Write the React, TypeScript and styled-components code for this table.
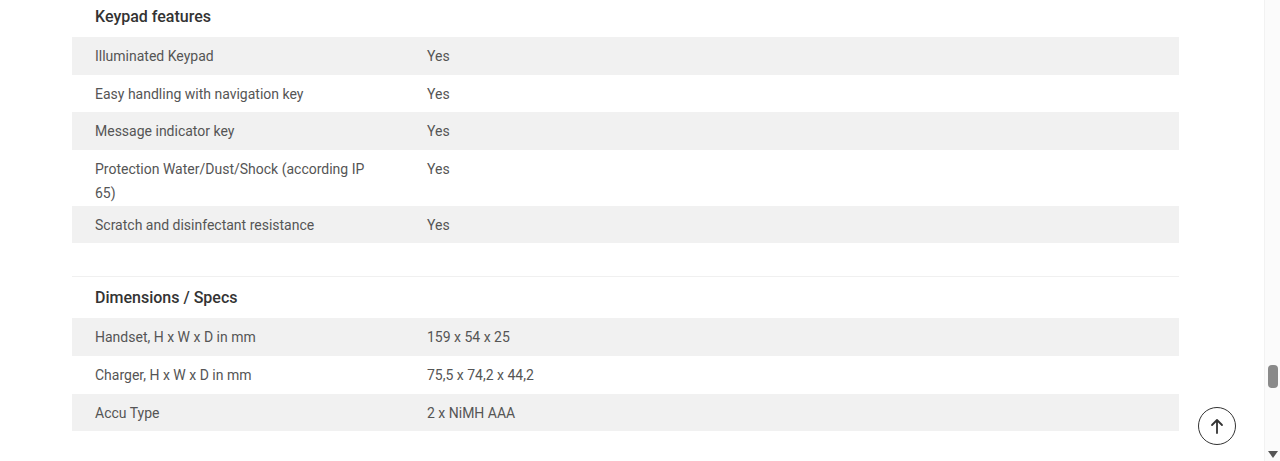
import styled, { createGlobalStyle } from "styled-components";

const GlobalStyle = createGlobalStyle`
  html, body {
    margin: 0;
    padding: 0;
    background: #fff;
    overflow: hidden;
  }

  body {
    font-family: Roboto, "Liberation Sans", Arial, sans-serif;
    color: #555;
  }
`;

type Spec = { label: string; value: string };

type Section = { title: string; rows: Spec[] };

const sections: Section[] = [
  {
    title: "Keypad features",
    rows: [
      { label: "Illuminated Keypad", value: "Yes" },
      { label: "Easy handling with navigation key", value: "Yes" },
      { label: "Message indicator key", value: "Yes" },
      { label: "Protection Water/Dust/Shock (according IP 65)", value: "Yes" },
      { label: "Scratch and disinfectant resistance", value: "Yes" },
    ],
  },
  {
    title: "Dimensions / Specs",
    rows: [
      { label: "Handset, H x W x D in mm", value: "159 x 54 x 25" },
      { label: "Charger, H x W x D in mm", value: "75,5 x 74,2 x 44,2" },
      { label: "Accu Type", value: "2 x NiMH AAA" },
    ],
  },
];

const Screen = styled.div`
  display: flex;
  width: 1280px;
  height: 461px;
  overflow: hidden;
`;

const Main = styled.main`
  flex: 1;
  padding: 0 85px 0 72px;
  margin-top: -5px;
`;

/**
 * One block of the spec sheet: a separator, a title and its table.
 */
const SpecSection = styled.section`
  border-top: 1px solid #f0f0f0;
  margin-bottom: 33px;
`;

const SectionTitle = styled.h3`
  margin: 0;
  padding: 9px 23px 8px;
  font-size: 16px;
  line-height: 24px;
  font-weight: 500;
  color: #333;
`;

const Table = styled.table`
  width: 100%;
  border-collapse: collapse;
  font-size: 14px;
  line-height: 24px;
`;

const Row = styled.tr<{ $striped: boolean }>`
  height: 37.6px;
  background: ${({ $striped }) => ($striped ? "#f1f1f1" : "transparent")};
`;

const Cell = styled.td`
  padding: 7px 23px 1px 0;
  vertical-align: top;
  color: #555;
`;

const LabelCell = styled(Cell)`
  box-sizing: border-box;
  width: 355px;
  padding-left: 23px;
  padding-right: 40px;
`;

const TopButton = styled.button`
  position: fixed;
  left: 1198px;
  top: 407px;
  width: 38px;
  height: 38px;
  display: flex;
  align-items: center;
  justify-content: center;
  padding: 0;
  border: 1.5px solid #333;
  border-radius: 50%;
  background: #fff;
  cursor: pointer;
`;

const Scrollbar = styled.div`
  width: 15px;
  flex: none;
  display: flex;
  flex-direction: column;
  align-items: center;
  background: #fbfbfb;
  border-left: 1px solid #f2f2f2;
`;

const Thumb = styled.div`
  width: 10px;
  height: 23px;
  margin-top: 365px;
  border-radius: 4px;
  background: #8a8a8a;
`;

const Arrow = styled.div`
  margin-top: auto;
  margin-bottom: 3px;
  width: 0;
  height: 0;
  border-left: 5px solid transparent;
  border-right: 5px solid transparent;
  border-top: 7px solid #555;
`;

export default function App() {
  return (
    <>
      <GlobalStyle />
      <Screen>
        <Main>
          {sections.map((section) => (
            <SpecSection key={section.title}>
              <SectionTitle>{section.title}</SectionTitle>
              <Table>
                <tbody>
                  {section.rows.map((row, i) => (
                    <Row key={row.label} $striped={i % 2 === 0}>
                      <LabelCell>{row.label}</LabelCell>
                      <Cell>{row.value}</Cell>
                    </Row>
                  ))}
                </tbody>
              </Table>
            </SpecSection>
          ))}
        </Main>
        <Scrollbar>
          <Thumb />
          <Arrow />
        </Scrollbar>
      </Screen>
      <TopButton aria-label="Back to top">
        <svg width="16" height="18" viewBox="0 0 16 18" fill="none">
          <path
            d="M8 16V3M3 8l5-5 5 5"
            stroke="#333"
            strokeWidth="1.8"
            strokeLinecap="round"
            strokeLinejoin="round"
          />
        </svg>
      </TopButton>
    </>
  );
}
